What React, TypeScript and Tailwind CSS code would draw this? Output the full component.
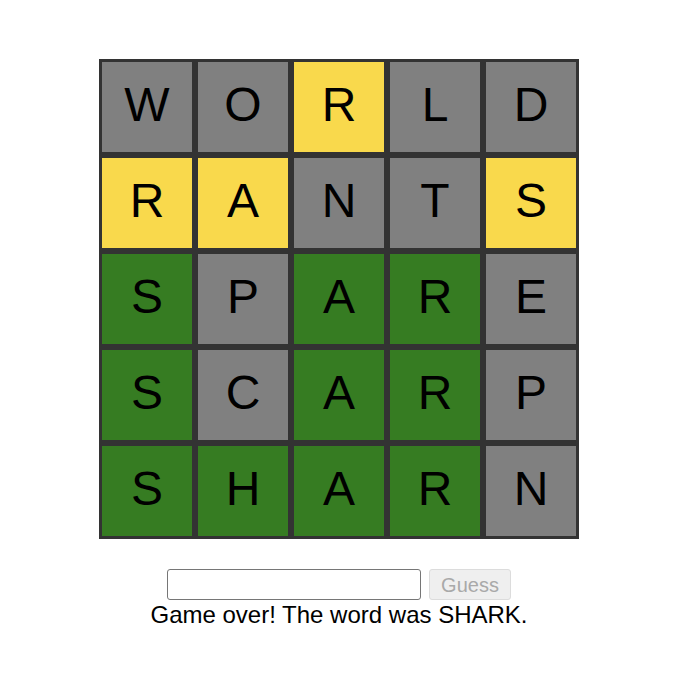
const rows: { word: string; colors: string }[] = [
  { word: "WORLD", colors: "xxyxx" },
  { word: "RANTS", colors: "yyxxy" },
  { word: "SPARE", colors: "gxggx" },
  { word: "SCARP", colors: "gxggx" },
  { word: "SHARN", colors: "ggggx" },
];

const tileBg: Record<string, string> = {
  x: "bg-[#808080]",
  y: "bg-[#f9d94c]",
  g: "bg-[#367c22]",
};

export default function App() {
  return (
    <div className="min-h-screen bg-white font-['Liberation_Sans',Arial,sans-serif] text-black">
      <div className="flex flex-col items-center pt-[59px] pl-[3px]">
        {/* Board */}
        <div className="flex flex-col">
          {rows.map((row, r) => (
            <div key={r} className="flex">
              {row.word.split("").map((ch, c) => (
                <div
                  key={c}
                  className={`w-[96px] h-[96px] border-[3px] border-[#333333] flex items-center justify-center text-[48px] leading-none ${tileBg[row.colors[c]]}`}
                >
                  <span className="-mt-[4px]">{ch}</span>
                </div>
              ))}
            </div>
          ))}
        </div>

        {/* Guess form */}
        <div className="mt-[30px] flex items-center gap-[8px]">
          <input
            type="text"
            disabled
            className="w-[254px] h-[31px] border border-[#767676] rounded-[3px] bg-white px-2 text-[20px]"
          />
          <button
            disabled
            className="w-[82px] h-[31px] border border-[#dcdcdc] rounded-[3px] bg-[#efefef] text-[20px] text-[#a9a9a9] leading-none"
          >
            Guess
          </button>
        </div>
        <p className="text-[24px] leading-[26px] mt-[2px]">Game over! The word was SHARK.</p>
      </div>
    </div>
  );
}
